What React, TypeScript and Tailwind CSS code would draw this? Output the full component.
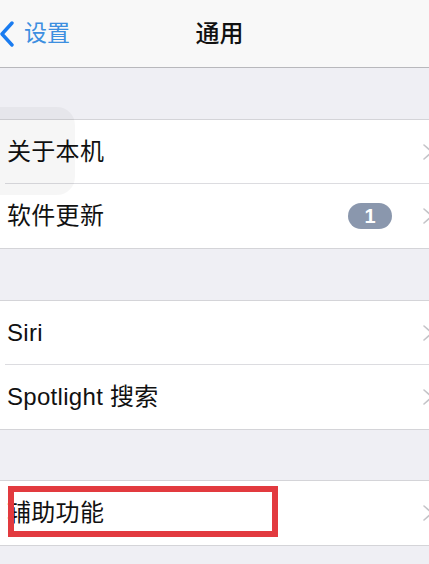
import type { ReactNode } from "react";

const font = { fontFamily: '"Liberation Sans", "Noto Sans CJK SC", sans-serif' };

function Chevron() {
  return (
    <svg width="14" height="18" viewBox="0 0 14 18" className="ml-auto mr-[-7px] shrink-0">
      <path d="M2 2 L10 9 L2 16" fill="none" stroke="#c4c4c8" strokeWidth="1.6" strokeLinecap="round" strokeLinejoin="round" />
    </svg>
  );
}

function Row({ label, divider, badge }: { label: string; divider?: boolean; badge?: string }) {
  return (
    <div className="relative flex h-[64px] items-center pl-[7px] pr-0">
      <span className="text-[24px] leading-none tracking-[0.3px] text-[#111]">{label}</span>
      <div className="ml-auto flex items-center">
        {badge && (
          <span className="mr-[30px] flex h-[26px] w-[44px] items-center justify-center rounded-full bg-[#8a97ad] text-[20px] font-bold text-white">
            {badge}
          </span>
        )}
        <Chevron />
      </div>
      {divider && <div className="absolute bottom-0 left-[5px] right-0 h-px bg-[#dcdce0]" />}
    </div>
  );
}

function Group({ children }: { children: ReactNode }) {
  return <div className="border-y border-[#d4d4d8] bg-white">{children}</div>;
}

export default function App() {
  return (
    <div className="relative h-[564px] w-[429px] overflow-hidden bg-[#efeff4]" style={font}>
      <div className="relative flex h-[68px] items-center justify-center border-b border-[#b8b8bc] bg-[#f8f8f8]">
        <div className="absolute left-0 top-0 flex h-full items-center">
          <svg width="16" height="28" viewBox="0 0 16 28" className="ml-[-1px]">
            <path d="M13 3 L3 14 L13 25" fill="none" stroke="#1a7cf0" strokeWidth="3.4" strokeLinecap="round" strokeLinejoin="round" />
          </svg>
          <span className="ml-[9px] text-[23px] text-[#3d8fe0]">设置</span>
        </div>
        <span className="ml-[10px] text-[24px] font-medium text-[#111]">通用</span>
      </div>

      <div className="h-[51px]" />
      <Group>
        <Row label="关于本机" divider />
        <Row label="软件更新" badge="1" />
      </Group>

      <div className="h-[51px]" />
      <Group>
        <Row label="Siri" divider />
        <Row label="Spotlight 搜索" />
      </Group>

      <div className="h-[50px]" />
      <Group>
        <Row label="辅助功能" />
      </Group>

      {/* faint assistive touch overlay */}
      <div className="pointer-events-none absolute left-[-20px] top-[107px] h-[88px] w-[95px] rounded-[18px] bg-black/[0.035]" />
      {/* red highlight box */}
      <div className="pointer-events-none absolute left-[8px] top-[486px] h-[51px] w-[270px] border-[6px] border-[#e23a3f]" />
    </div>
  );
}
